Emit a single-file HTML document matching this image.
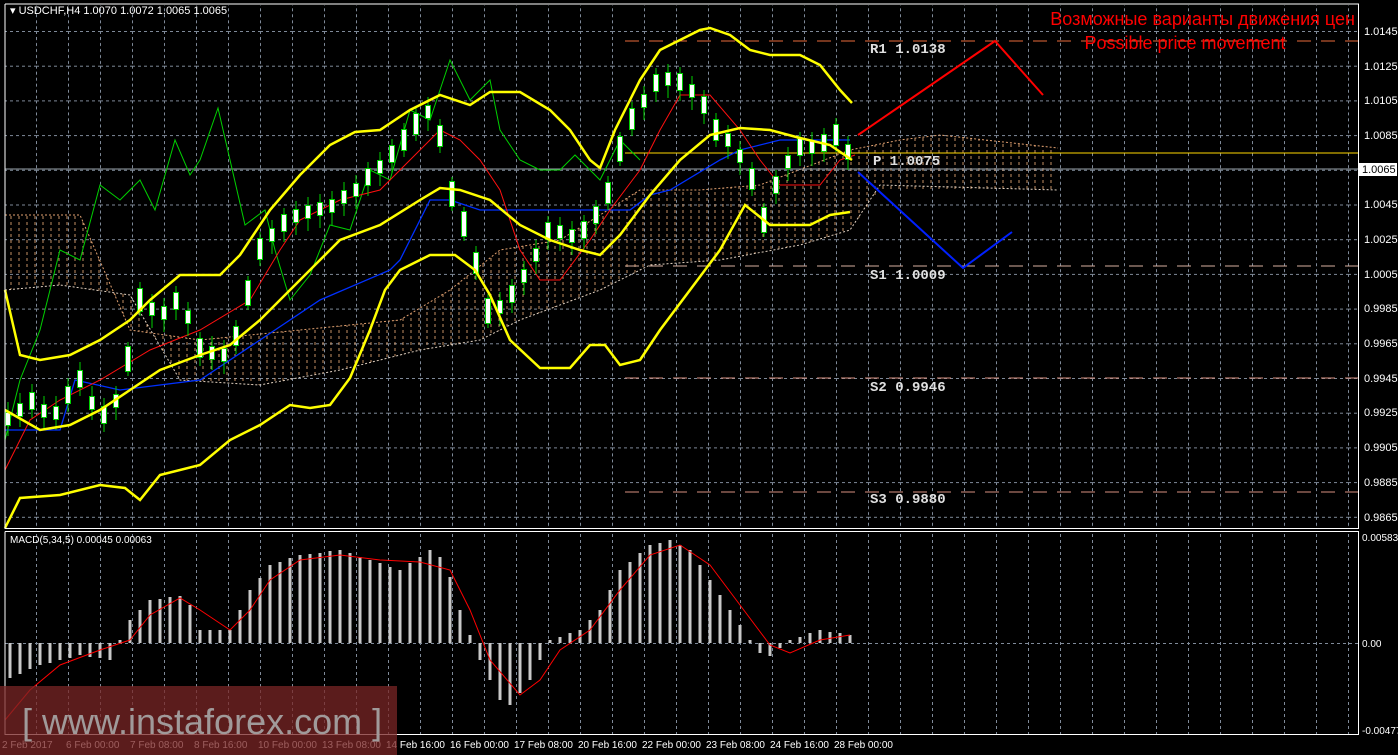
<!DOCTYPE html><html><head><meta charset="utf-8"><style>
html,body{margin:0;padding:0;background:#000;width:1398px;height:755px;overflow:hidden}
svg{display:block}
</style></head><body>
<svg width="1398" height="755" xmlns="http://www.w3.org/2000/svg" font-family="Liberation Sans, sans-serif">
<defs>
<pattern id="hatch" width="8" height="6" patternUnits="userSpaceOnUse"><line x1="3" y1="0" x2="3" y2="3" stroke="#d9a070" stroke-width="1"/></pattern>
<pattern id="g1" x="36" y="31" width="32" height="34.7" patternUnits="userSpaceOnUse">
<line x1="0.5" y1="0" x2="0.5" y2="34.7" stroke="#7f8a99" stroke-dasharray="3,3"/>
<line x1="0" y1="0.5" x2="32" y2="0.5" stroke="#7f8a99" stroke-dasharray="3,3"/>
</pattern>
<pattern id="g2" x="36" y="0" width="32" height="6" patternUnits="userSpaceOnUse">
<line x1="0.5" y1="0" x2="0.5" y2="3" stroke="#7f8a99"/>
</pattern>
</defs>
<rect x="0" y="0" width="1398" height="755" fill="#000"/>
<rect x="5" y="5" width="1353" height="523" fill="url(#g1)"/>
<rect x="5" y="532" width="1353" height="202" fill="url(#g2)"/>
<line x1="5" y1="643.5" x2="1358" y2="643.5" stroke="#7f8a99" stroke-dasharray="3,3"/>
<polygon fill="url(#hatch)" opacity="0.9" points="5,215 80,215 130,330 200,340 300,330 400,320 450,290 500,250 560,240 640,190 700,190 760,185 850,150 900,140 940,135 1058,148 1058,190 880,190 850,230 800,245 720,260 650,265 600,290 520,320 480,340 420,350 340,370 260,385 180,380 130,295 60,285 5,290"/>
<polyline fill="none" stroke="#e0a070" stroke-dasharray="2,2" points="5,215 80,215 130,330 200,340 300,330 400,320 450,290 500,250 560,240 640,190 700,190 760,185 850,150 900,140 940,135 1058,148"/>
<polyline fill="none" stroke="#e0d0c0" stroke-dasharray="2,2" points="5,290 60,285 130,295 180,380 260,385 340,370 420,350 480,340 520,320 600,290 650,265 720,260 800,245 850,230 880,185 1058,190"/>
<g stroke-dasharray="14,10" stroke-width="1">
<line x1="625" y1="41" x2="1358" y2="41" stroke="#e86a3a"/>
<line x1="625" y1="266" x2="1358" y2="266" stroke="#d8b0a0"/>
<line x1="625" y1="378" x2="1358" y2="378" stroke="#d89080"/>
<line x1="625" y1="492" x2="1358" y2="492" stroke="#d89080"/>
</g>
<line x1="625" y1="153" x2="1358" y2="153" stroke="#ffd700"/>
<line x1="5" y1="169" x2="1358" y2="169" stroke="#9aa3ad"/>
<g fill="#e0e0e0" font-family="Liberation Mono, monospace" font-size="14" font-weight="bold">
<text x="870" y="53">R1 1.0138</text><text x="873" y="165">P 1.0075</text><text x="870" y="279">S1 1.0009</text><text x="870" y="391">S2 0.9946</text><text x="870" y="503">S3 0.9880</text></g>
<polyline fill="none" stroke="#00d000" stroke-width="1" points="5,440 20,380 40,330 60,250 80,260 100,185 120,200 140,180 155,210 175,140 190,175 200,160 218,108 230,160 245,225 265,210 275,250 290,300 310,275 330,225 350,230 370,170 390,180 410,110 430,120 450,60 470,100 490,80 500,130 520,160 540,170 560,170 575,155 590,170 600,180 620,140 640,160"/>
<polyline fill="none" stroke="#0030ff" stroke-width="1.3" points="5,430 60,430 75,380 120,390 200,380 260,340 320,300 390,270 400,260 430,200 450,200 480,210 500,210 630,210 650,195 670,190 720,160 740,150 780,140 850,140"/>
<polyline fill="none" stroke="#ff1010" stroke-width="1" points="5,470 30,420 60,400 100,380 150,350 200,330 250,300 280,250 300,220 340,200 380,190 420,150 440,130 460,140 480,160 500,190 520,250 540,280 560,280 590,240 610,210 640,170 660,130 680,95 710,95 740,130 760,160 780,185 820,185 840,160 855,155"/>
<path fill="none" stroke="#00d000" stroke-width="1" d="M8 402v34M20 393v34M32 384v34M44 396v34M56 396v34M68 378v34M80 362v34M92 386v34M104 398v34M116 386v34M128 342v34M140 282v34M152 294v34M164 298v34M176 286v34M188 302v34M200 332v34M212 336v34M224 340v34M236 320v34M248 276v34M260 232v34M272 220v34M284 208v34M296 201v34M308 197v34M320 194v34M332 191v34M344 182v34M356 175v34M368 162v34M380 152v34M392 139v34M404 123v34M416 107v34M428 97v34M440 119v34M452 177v34M464 207v34M476 246v34M488 294v34M500 292v34M512 279v34M524 261v34M536 240v34M548 216v34M560 217v34M572 221v34M584 215v34M596 200v34M608 176v34M620 132v34M632 102v34M644 86v34M656 68v34M668 64v34M680 67v34M692 76v34M704 90v34M716 113v34M728 125v34M740 141v34M752 162v34M764 203v34M776 170v34M788 147v34M800 132v34M812 132v34M824 128v34M836 118v34M848 136v34"/>
<path fill="none" stroke="#00d000" stroke-width="6" d="M8 412v14M20 403v14M32 392v18M44 404v14M56 406v14M68 386v18M80 370v18M92 396v14M104 406v18M116 394v14M128 346v26M140 288v24M152 302v14M164 306v14M176 292v18M188 310v14M200 338v20M212 346v14M224 348v14M236 326v20M248 280v26M260 238v22M272 228v14M284 214v18M296 209v14M308 205v14M320 202v14M332 199v14M344 190v14M356 183v14M368 168v18M380 160v14M392 145v18M404 129v22M416 113v22M428 105v14M440 125v22M452 181v26M464 211v26M476 252v22M488 298v26M500 300v14M512 285v18M524 269v14M536 248v14M548 222v18M560 225v14M572 229v14M584 221v18M596 206v18M608 182v22M620 136v26M632 108v22M644 94v14M656 74v18M668 72v14M680 73v18M692 84v14M704 96v18M716 119v22M728 133v14M740 149v14M752 168v22M764 207v26M776 176v18M788 155v14M800 138v18M812 140v14M824 134v18M836 124v22M848 144v16"/>
<path fill="none" stroke="#fff" stroke-width="4" d="M8 413v12M20 404v12M32 393v16M44 405v12M56 407v12M68 387v16M80 371v16M92 397v12M104 407v16M116 395v12M128 347v24M140 289v22M152 303v12M164 307v12M176 293v16M188 311v12M200 339v18M212 347v12M224 349v12M236 327v18M248 281v24M260 239v20M272 229v12M284 215v16M296 210v12M308 206v12M320 203v12M332 200v12M344 191v12M356 184v12M368 169v16M380 161v12M392 146v16M404 130v20M416 114v20M428 106v12M440 126v20M452 182v24M464 212v24M476 253v20M488 299v24M500 301v12M512 286v16M524 270v12M536 249v12M548 223v16M560 226v12M572 230v12M584 222v16M596 207v16M608 183v20M620 137v24M632 109v20M644 95v12M656 75v16M668 73v12M680 74v16M692 85v12M704 97v16M716 120v20M728 134v12M740 150v12M752 169v20M764 208v24M776 177v16M788 156v12M800 139v16M812 141v12M824 135v16M836 125v20M848 145v14"/>
<g fill="none" stroke="#ffff00" stroke-width="2.5">
<polyline points="5,290 20,355 40,360 70,355 100,340 130,320 150,300 180,275 220,275 240,255 270,210 300,175 330,145 355,132 380,130 410,110 440,95 470,105 490,92 520,92 550,110 570,130 590,160 600,168 615,130 640,80 660,50 680,40 700,30 710,28 730,35 750,50 770,55 800,55 820,65 840,90 852,103"/>
<polyline points="5,410 40,430 70,425 100,410 130,390 160,370 200,355 230,345 260,320 300,280 340,240 380,225 420,200 440,188 460,190 490,200 520,225 550,240 580,250 600,255 620,235 650,195 680,160 710,135 740,128 770,130 800,138 830,145 852,160"/>
<polyline points="5,528 20,498 60,495 100,485 125,488 140,500 160,475 200,465 230,440 260,425 290,405 310,408 330,405 350,378 370,330 385,290 400,270 430,255 455,255 475,270 490,295 510,340 540,368 570,368 590,345 605,345 620,365 640,360 660,330 690,290 720,250 745,205 770,225 810,225 830,215 850,212"/>
</g>
<polyline fill="none" stroke="#ff0000" stroke-width="2" points="858,135 995,41 1043,95"/>
<polyline fill="none" stroke="#0020ff" stroke-width="2" points="858,172 963,268 1012,232"/>
<text x="1355" y="25" text-anchor="end" fill="#ff0000" font-size="18">Возможные варианты движения цен</text>
<text x="1185" y="49" text-anchor="middle" fill="#ff0000" font-size="18">Possible price movement</text>
<path fill="none" stroke="#c8c8c8" stroke-width="3" d="M10 643V678M20 643V674M30 643V669M40 643V665M50 643V663M60 643V660M70 643V658M80 643V655M90 643V657M100 643V658M110 643V660M120 643V640M130 643V620M140 643V610M150 643V600M160 643V599M170 643V597M180 643V596M190 643V605M200 643V630M210 643V630M220 643V630M230 643V630M240 643V610M250 643V590M260 643V578M270 643V565M280 643V562M290 643V558M300 643V555M310 643V554M320 643V553M330 643V551M340 643V550M350 643V553M360 643V557M370 643V560M380 643V563M390 643V567M400 643V570M410 643V563M420 643V557M430 643V550M440 643V557M450 643V577M460 643V610M470 643V635M480 643V660M490 643V680M500 643V700M510 643V705M520 643V693M530 643V680M540 643V660M550 643V640M560 643V637M570 643V633M580 643V630M590 643V620M600 643V610M610 643V590M620 643V570M630 643V562M640 643V553M650 643V545M660 643V543M670 643V540M680 643V545M690 643V550M700 643V565M710 643V580M720 643V595M730 643V610M740 643V625M750 643V640M760 643V653M770 643V656M780 643V648M790 643V640M800 643V637M810 643V633M820 643V630M830 643V632M840 643V633M850 643V635"/>
<polyline fill="none" stroke="#ff0000" stroke-width="1" points="5,720 30,690 60,665 100,650 130,640 150,615 180,598 200,610 230,630 250,610 270,580 300,560 340,555 380,560 420,562 450,570 470,610 490,660 520,695 540,680 560,650 590,630 620,590 650,555 680,545 710,565 740,605 770,645 790,653 820,640 850,635"/>
<g fill="none" stroke="#fff" stroke-width="1">
<polyline points="5,4 1358.5,4 1358.5,528.5 5,528.5 5,4"/>
<polyline points="5,531.5 1358.5,531.5 1358.5,734.5 5,734.5 5,531.5"/>
</g>
<g fill="#fff" font-size="11">
<text x="1364" y="35">1.0145</text><text x="1364" y="70">1.0125</text><text x="1364" y="104">1.0105</text><text x="1364" y="139">1.0085</text><text x="1364" y="208">1.0045</text><text x="1364" y="243">1.0025</text><text x="1364" y="278">1.0005</text><text x="1364" y="312">0.9985</text><text x="1364" y="347">0.9965</text><text x="1364" y="382">0.9945</text><text x="1364" y="416">0.9925</text><text x="1364" y="451">0.9905</text><text x="1364" y="486">0.9885</text><text x="1364" y="521">0.9865</text>
<text x="1362" y="541" font-size="10">0.00583</text><text x="1362" y="647" font-size="10">0.00</text><text x="1362" y="734" font-size="10">-0.00477</text>
</g>
<g fill="#fff" font-size="10">
<text x="2" y="748">2 Feb 2017</text><text x="66" y="748">6 Feb 00:00</text><text x="130" y="748">7 Feb 08:00</text><text x="194" y="748">8 Feb 16:00</text><text x="258" y="748">10 Feb 00:00</text><text x="322" y="748">13 Feb 08:00</text><text x="386" y="748">14 Feb 16:00</text><text x="450" y="748">16 Feb 00:00</text><text x="514" y="748">17 Feb 08:00</text><text x="578" y="748">20 Feb 16:00</text><text x="642" y="748">22 Feb 00:00</text><text x="706" y="748">23 Feb 08:00</text><text x="770" y="748">24 Feb 16:00</text><text x="834" y="748">28 Feb 00:00</text>
</g>
<rect x="1359" y="163" width="38" height="13" fill="#fff"/>
<text x="1362" y="173" font-size="11" fill="#000">1.0065</text>
<text x="10" y="14" font-size="11" fill="#fff">▾  USDCHF,H4  1.0070 1.0072 1.0065 1.0065</text>
<text x="10" y="543" font-size="10" fill="#fff">MACD(5,34,5) 0.00045 0.00063</text>
<rect x="0" y="686" width="397" height="69" fill="#7a2626" opacity="0.75"/>
<text x="22" y="734" font-size="36" fill="#a09a9a">[ www.instaforex.com ]</text>
</svg>
</body></html>
